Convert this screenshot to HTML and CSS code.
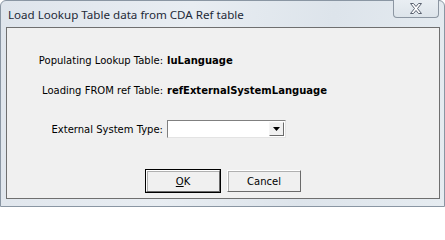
FILE: index.html
```html
<!DOCTYPE html>
<html>
<head>
<meta charset="utf-8">
<link rel="stylesheet" href="styles.css">
</head>
<body>
<div class="window">
  <div class="titlebar">
    <span class="title">Load Lookup Table data from CDA Ref table</span>
    <div class="close">
      <svg width="14" height="11" viewBox="0 0 14 11">
        <path d="M1.5 0.5h3l2.5 3 2.5-3h3l-4 5 4 5h-3l-2.5-3-2.5 3h-3l4-5z" fill="#ffffff" stroke="#5a6270" stroke-width="1"/>
      </svg>
    </div>
  </div>
  <div class="client">
    <div class="row r1"><span class="label">Populating Lookup Table:</span><span class="value">luLanguage</span></div>
    <div class="row r2"><span class="label">Loading FROM ref Table:</span><span class="value">refExternalSystemLanguage</span></div>
    <div class="row r3"><span class="label">External System Type:</span>
      <div class="combo"><div class="combo-field"></div><div class="combo-btn"><svg width="7" height="4" viewBox="0 0 7 4"><path d="M0 0h7L3.5 4z" fill="#000"/></svg></div></div>
    </div>
    <div class="buttons">
      <div class="btn default"><span><u>O</u>K</span></div>
      <div class="btn">Cancel</div>
    </div>
  </div>
</div>
</body>
</html>
```
FILE: styles.css
```css
html, body {
  margin: 0;
  padding: 0;
  background: #ffffff;
}
.window {
  width: 445px;
  height: 207px;
  box-sizing: border-box;
  background: linear-gradient(100deg, #dfe5ec 0%, #e8edf2 40%, #dde4eb 70%, #e6ecf1 100%);
  border: 1px solid #8a96a3;
  border-radius: 6px 6px 0 0;
  display: flex;
  flex-direction: column;
}
.titlebar {
  height: 26px;
  display: flex;
  align-items: flex-start;
  justify-content: space-between;
  padding-left: 7px;
  padding-right: 5px;
}
.title {
  font-family: "Noto Sans", "Open Sans", sans-serif;
  font-size: 11.6px;
  color: #1e2a38;
  margin-top: 6px;
}
.close {
  width: 46px;
  height: 18px;
  margin-top: -1px;
  box-sizing: border-box;
  border: 1px solid #8c96a2;
  border-top: none;
  border-radius: 0 0 4px 4px;
  background: linear-gradient(#e9eef3, #dde4ea);
  display: flex;
  align-items: center;
  justify-content: center;
}
.client {
  margin: 0 4px 7px 5px;
  flex: 1;
  background: #f0f0f0;
  border: 1px solid #6f6f6f;
  font-family: "DejaVu Sans", sans-serif;
  font-size: 10px;
  color: #000;
  display: flex;
  flex-direction: column;
}
.row {
  display: flex;
  align-items: center;
}
.label {
  width: 160px;
  text-align: right;
  padding-right: 4px;
  box-sizing: border-box;
}
.value {
  font-weight: bold;
}
.r1 { margin-top: 27px; }
.r2 { margin-top: 19px; }
.r3 { margin-top: 24px; }
.combo {
  width: 119px;
  height: 18px;
  box-sizing: border-box;
  border: 1px solid #808080;
  border-right-color: #e3e3e3;
  border-bottom-color: #e3e3e3;
  background: #fff;
  display: flex;
  padding: 1px;
}
.combo-field { flex: 1; }
.combo-btn {
  width: 15px;
  box-sizing: border-box;
  border: 1px solid #f5f5f5;
  border-right-color: #6a6a6a;
  border-bottom-color: #6a6a6a;
  background: #f0f0f0;
  display: flex;
  align-items: center;
  justify-content: center;
}
.buttons {
  display: flex;
  margin-top: 32px;
  padding-left: 139px;
  gap: 7px;
}
.btn {
  width: 74px;
  height: 22px;
  box-sizing: border-box;
  background: #f0f0f0;
  border: 1px solid #ffffff;
  border-right-color: #6a6a6a;
  border-bottom-color: #6a6a6a;
  box-shadow: 1px 1px 0 #b0b0b0 inset;
  display: flex;
  align-items: center;
  justify-content: center;
}
.btn.default {
  outline: 1px solid #000;
}
.btn u { text-decoration: underline; }
```
